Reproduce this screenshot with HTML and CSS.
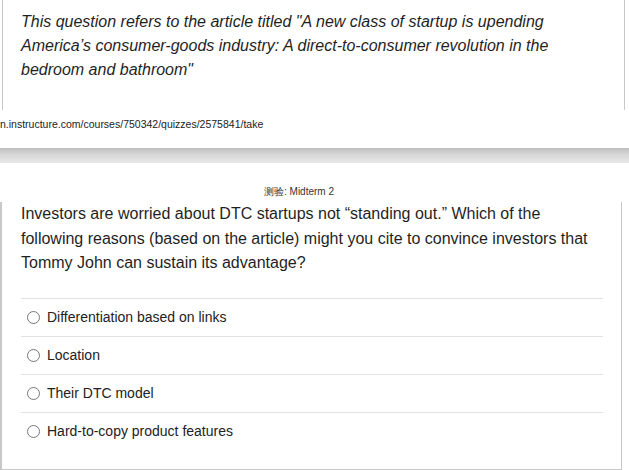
FILE: index.html
```
<!DOCTYPE html>
<html>
<head>
<meta charset="utf-8">
<link rel="stylesheet" href="styles.css">
</head>
<body>
<div class="article-box">
  <p class="article-text">This question refers to the article titled "A new class of startup is upending America’s consumer-goods industry: A direct-to-consumer revolution in the bedroom and bathroom"</p>
</div>
<div class="url">n.instructure.com/courses/750342/quizzes/2575841/take</div>
<div class="band"></div>
<div class="quiz-title">测验: Midterm 2</div>
<div class="question-box">
  <p class="question-text">Investors are worried about DTC startups not “standing out.” Which of the following reasons (based on the article) might you cite to convince investors that Tommy John can sustain its advantage?</p>
  <div class="answers">
    <label class="answer"><span class="radio"></span>Differentiation based on links</label>
    <label class="answer"><span class="radio"></span>Location</label>
    <label class="answer"><span class="radio"></span>Their DTC model</label>
    <label class="answer"><span class="radio"></span>Hard-to-copy product features</label>
  </div>
</div>
</body>
</html>
```
FILE: styles.css
```
html, body {
  margin: 0;
  padding: 0;
  background: #ffffff;
}
body {
  font-family: "Liberation Sans", Arial, sans-serif;
  color: #222;
  width: 629px;
  height: 470px;
  overflow: hidden;
}
.article-box {
  margin-left: 2px;
  width: 603px;
  height: 110px;
  border-left: 1px solid #c8c8c8;
  border-right: 1px solid #c8c8c8;
  padding: 0 0 0 18px;
}
.article-text {
  margin: 0;
  padding-top: 10px;
  width: 540px;
  font-size: 16px;
  font-style: italic;
  line-height: 24px;
  color: #1f1f1f;
}
.url {
  font-size: 10.5px;
  line-height: 14px;
  margin-top: 7px;
  color: #222;
  white-space: nowrap;
}
.band {
  margin-top: 17px;
  height: 15px;
  background: linear-gradient(to bottom, #bdbdbd 0%, #d6d6d6 40%, #e8e8e8 100%);
}
.quiz-title {
  margin-top: 22px;
  padding-left: 264px;
  font-size: 10px;
  line-height: 14px;
  color: #333;
}
.question-box {
  margin-top: 3px;
  width: 622px;
  border-left: 2px solid #c8c8c8;
  border-right: 1px solid #c8c8c8;
  border-bottom: 1px solid #c8c8c8;
  height: 268px;
  box-sizing: border-box;
  padding: 0 18px 0 19px;
}
.question-text {
  margin: 0;
  font-size: 16px;
  line-height: 24.5px;
  color: #1f1f1f;
}
.answers {
  margin-top: 22px;
  display: flex;
  flex-direction: column;
}
.answer {
  display: flex;
  align-items: center;
  gap: 7px;
  height: 38px;
  border-top: 1px solid #e2e2e2;
  font-size: 14px;
  color: #222;
  padding-left: 6px;
  box-sizing: border-box;
}
.radio {
  width: 13px;
  height: 13px;
  border: 1px solid #777;
  border-radius: 50%;
  box-sizing: border-box;
  background: #fff;
  flex: none;
}
```
